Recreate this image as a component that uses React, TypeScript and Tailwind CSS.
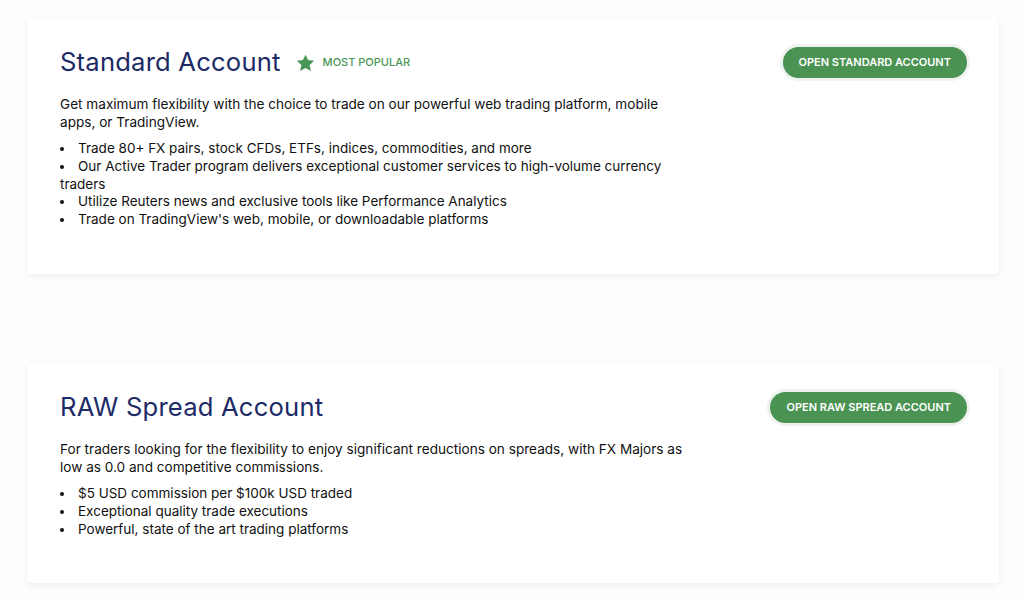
import React from 'react';

interface Account {
    title: string;
    badge?: string;
    cta: string;
    intro: string;
    points: string[];
}

const accounts: Account[] = [
    {
        title: 'Standard Account',
        badge: 'MOST POPULAR',
        cta: 'OPEN STANDARD ACCOUNT',
        intro: 'Get maximum flexibility with the choice to trade on our powerful web trading platform, mobile apps, or TradingView.',
        points: [
            'Trade 80+ FX pairs, stock CFDs, ETFs, indices, commodities, and more',
            'Our Active Trader program delivers exceptional customer services to high-volume currency traders',
            'Utilize Reuters news and exclusive tools like Performance Analytics',
            "Trade on TradingView's web, mobile, or downloadable platforms",
        ],
    },
    {
        title: 'RAW Spread Account',
        cta: 'OPEN RAW SPREAD ACCOUNT',
        intro: 'For traders looking for the flexibility to enjoy significant reductions on spreads, with FX Majors as low as 0.0 and competitive commissions.',
        points: [
            '$5 USD commission per $100k USD traded',
            'Exceptional quality trade executions',
            'Powerful, state of the art trading platforms',
        ],
    },
];

const Star = () => (
    <svg width="19" height="18" viewBox="0 0 24 23" className="text-[#4a9656]">
        <path
            fill="currentColor"
            d="M12 0.8l3.3 7 7.7 0.9-5.7 5.3 1.5 7.6L12 17.8l-6.8 3.8 1.5-7.6L1 8.7l7.7-0.9z"
        />
    </svg>
);

const AccountCard: React.FC<{ account: Account }> = ({ account }) => (
    <div className="mx-[27px] w-[972px] bg-white rounded-[3px] shadow-[0_3px_6px_rgba(0,0,0,0.05),0_0_2px_rgba(0,0,0,0.04)] flex justify-between pl-[33px] pr-[32px] pt-[28px] pb-[45px]">
        <div className="w-[625px]">
            {/* Heading */}
            <div className="flex items-center h-[32px]">
                <h2 className="text-[25.6px] leading-[32px] text-[#1c2a66] tracking-[0.2px]">{account.title}</h2>
                {account.badge && (
                    <div className="flex items-center ml-[15px] gap-[8px] mt-[1px]">
                        <Star />
                        <span className="text-[11px] font-medium text-[#4a9656]">{account.badge}</span>
                    </div>
                )}
            </div>

            <p className="mt-[17px] text-[13.6px] leading-[18px] text-[#111]">{account.intro}</p>

            <ul className="mt-[9px] text-[13.5px] leading-[17.8px] text-[#111]">
                {account.points.map(point => (
                    <li key={point} className="list-disc list-inside marker:text-[13px]">
                        {point}
                    </li>
                ))}
            </ul>
        </div>

        <div className="pt-[1px]">
            <button
                type="button"
                className="h-[31px] px-[16px] rounded-full bg-[#4a9352] text-white text-[11px] font-semibold shadow-[0_0_0_3px_#eff2f0] whitespace-nowrap"
            >
                {account.cta}
            </button>
        </div>
    </div>
);

export default function App() {
    return (
        <div
            className="w-[1024px] h-[598px] overflow-hidden bg-[#fdfdfd] pt-[18px] flex flex-col gap-[89px]"
            style={{ fontFamily: 'Inter, "Noto Sans", sans-serif' }}
        >
            {accounts.map(account => (
                <AccountCard key={account.title} account={account} />
            ))}
        </div>
    );
}
